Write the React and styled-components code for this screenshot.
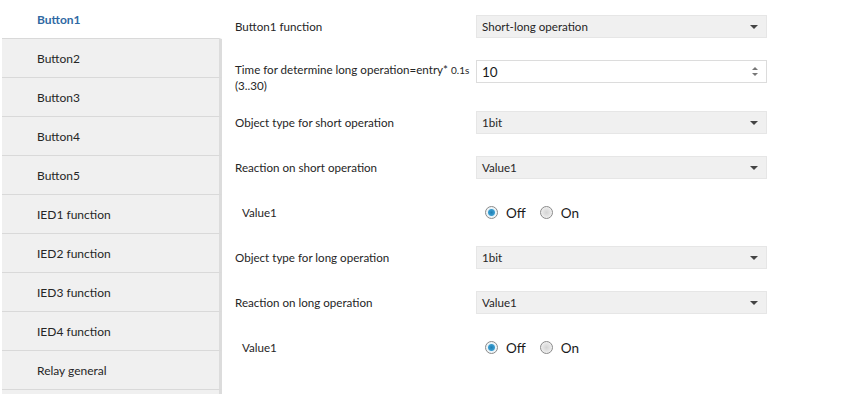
import React from "react";
import styled, { createGlobalStyle } from "styled-components";

const Global = createGlobalStyle`
  html, body { margin: 0; padding: 0; background: #fff; }
  body { font-family: Lato, "Noto Sans", sans-serif; overflow: hidden; }
`;

const Page = styled.div`
  display: flex;
  width: 859px;
  height: 394px;
  background: #fff;
`;

const Sidebar = styled.nav`
  display: flex;
  flex-direction: column;
  width: 220px;
  margin-left: 2px;
  height: 394px;
  background: #f0f0f0;
  flex-shrink: 0;
`;

const NavItem = styled.div`
  height: 38px;
  display: flex;
  align-items: center;
  padding-left: 35px;
  border-bottom: 1px solid #d9d9d9;
  border-right: 3px solid ${(p) => (p.$active ? "#fff" : "#dcdcdc")};
  background: ${(p) => (p.$active ? "#fff" : "#f0f0f0")};
  color: ${(p) => (p.$active ? "#2f69a3" : "#262626")};
  font-weight: ${(p) => (p.$active ? 700 : 400)};
  font-size: 12px;
  flex-shrink: 0;
`;

const Filler = styled.div`
  flex: 1;
  border-right: 3px solid #dcdcdc;
`;

const Content = styled.main`
  flex: 1;
  padding: 15px 0 0 13px;
  display: flex;
  flex-direction: column;
`;

const Row = styled.div`
  display: flex;
  align-items: flex-start;
  height: ${(p) => (p.$tall ? 51 : 45)}px;
`;

const Label = styled.div`
  width: 241px;
  flex-shrink: 0;
  font-size: 11.6px;
  color: #262626;
  line-height: ${(p) => (p.$multi ? "16px" : "24px")};
  padding-top: ${(p) => (p.$multi ? 2 : 0)}px;
  padding-left: ${(p) => (p.$indent ? 7 : 0)}px;
  white-space: nowrap;
  position: relative;
  z-index: 1;
`;

const Small = styled.span`
  font-size: 10px;
`;

const Select = styled.div`
  width: 291px;
  height: 23px;
  box-sizing: border-box;
  background: #f0f0f0;
  border: 1px solid #e6e6e6;
  display: flex;
  align-items: center;
  justify-content: space-between;
  padding: 0 8px 0 5px;
  font-size: 11.6px;
  color: #262626;
`;

const Caret = styled.span`
  width: 0;
  height: 0;
  border-left: 4px solid transparent;
  border-right: 4px solid transparent;
  border-top: 4px solid #444;
`;

const Spin = styled.div`
  width: 291px;
  height: 23px;
  box-sizing: border-box;
  background: #fff;
  border: 1px solid #dcdcdc;
  display: flex;
  align-items: center;
  justify-content: space-between;
  padding: 0 8px 0 5px;
  font-size: 13.5px;
  color: #1a1a1a;
`;

const SpinArrows = styled.span`
  display: flex;
  flex-direction: column;
  gap: 3px;
`;

const Tri = styled.span`
  width: 0;
  height: 0;
  border-left: 3px solid transparent;
  border-right: 3px solid transparent;
  ${(p) =>
    p.$up ? "border-bottom: 3px solid #777;" : "border-top: 3px solid #777;"}
`;

const RadioGroup = styled.div`
  display: flex;
  align-items: center;
  height: 23px;
  padding-left: 2px;
  gap: 14px;
`;

const RadioOpt = styled.label`
  display: flex;
  align-items: center;
  gap: 8px;
  font-size: 13.5px;
  color: #1a1a1a;
`;

const RadioDot = styled.span`
  width: 11px;
  height: 11px;
  border-radius: 50%;
  border: 1px solid #8a8a8a;
  box-sizing: content-box;
  background: ${(p) =>
    p.$on
      ? "radial-gradient(circle, #1f7fb4 0, #3a9ccf 3px, #e8f4fa 4px, #f4f4f4 6px)"
      : "radial-gradient(circle, #d4d4d4 0, #e6e6e6 4px, #f4f4f4 6px)"};
`;

function Radio({ on, children }) {
  return (
    <RadioOpt>
      <RadioDot $on={on} />
      {children}
    </RadioOpt>
  );
}

const nav = [
  "Button1",
  "Button2",
  "Button3",
  "Button4",
  "Button5",
  "IED1 function",
  "IED2 function",
  "IED3 function",
  "IED4 function",
  "Relay general",
];

function SelectField({ value }) {
  return (
    <Select>
      <span>{value}</span>
      <Caret />
    </Select>
  );
}

export default function App() {
  return (
    <Page>
      <Global />
      <Sidebar>
        {nav.map((n, i) => (
          <NavItem key={n} $active={i === 0}>
            {n}
          </NavItem>
        ))}
        <Filler />
      </Sidebar>
      <Content>
        <Row>
          <Label>Button1 function</Label>
          <SelectField value="Short-long operation" />
        </Row>
        <Row $tall>
          <Label $multi>
            Time for determine long operation=entry* <Small>0.1s</Small>
            <br />
            (3..30)
          </Label>
          <Spin>
            <span>10</span>
            <SpinArrows>
              <Tri $up />
              <Tri />
            </SpinArrows>
          </Spin>
        </Row>
        <Row>
          <Label>Object type for short operation</Label>
          <SelectField value="1bit" />
        </Row>
        <Row>
          <Label>Reaction on short operation</Label>
          <SelectField value="Value1" />
        </Row>
        <Row>
          <Label $indent>Value1</Label>
          <RadioGroup>
            <Radio on>Off</Radio>
            <Radio>On</Radio>
          </RadioGroup>
        </Row>
        <Row>
          <Label>Object type for long operation</Label>
          <SelectField value="1bit" />
        </Row>
        <Row>
          <Label>Reaction on long operation</Label>
          <SelectField value="Value1" />
        </Row>
        <Row>
          <Label $indent>Value1</Label>
          <RadioGroup>
            <Radio on>Off</Radio>
            <Radio>On</Radio>
          </RadioGroup>
        </Row>
      </Content>
    </Page>
  );
}
